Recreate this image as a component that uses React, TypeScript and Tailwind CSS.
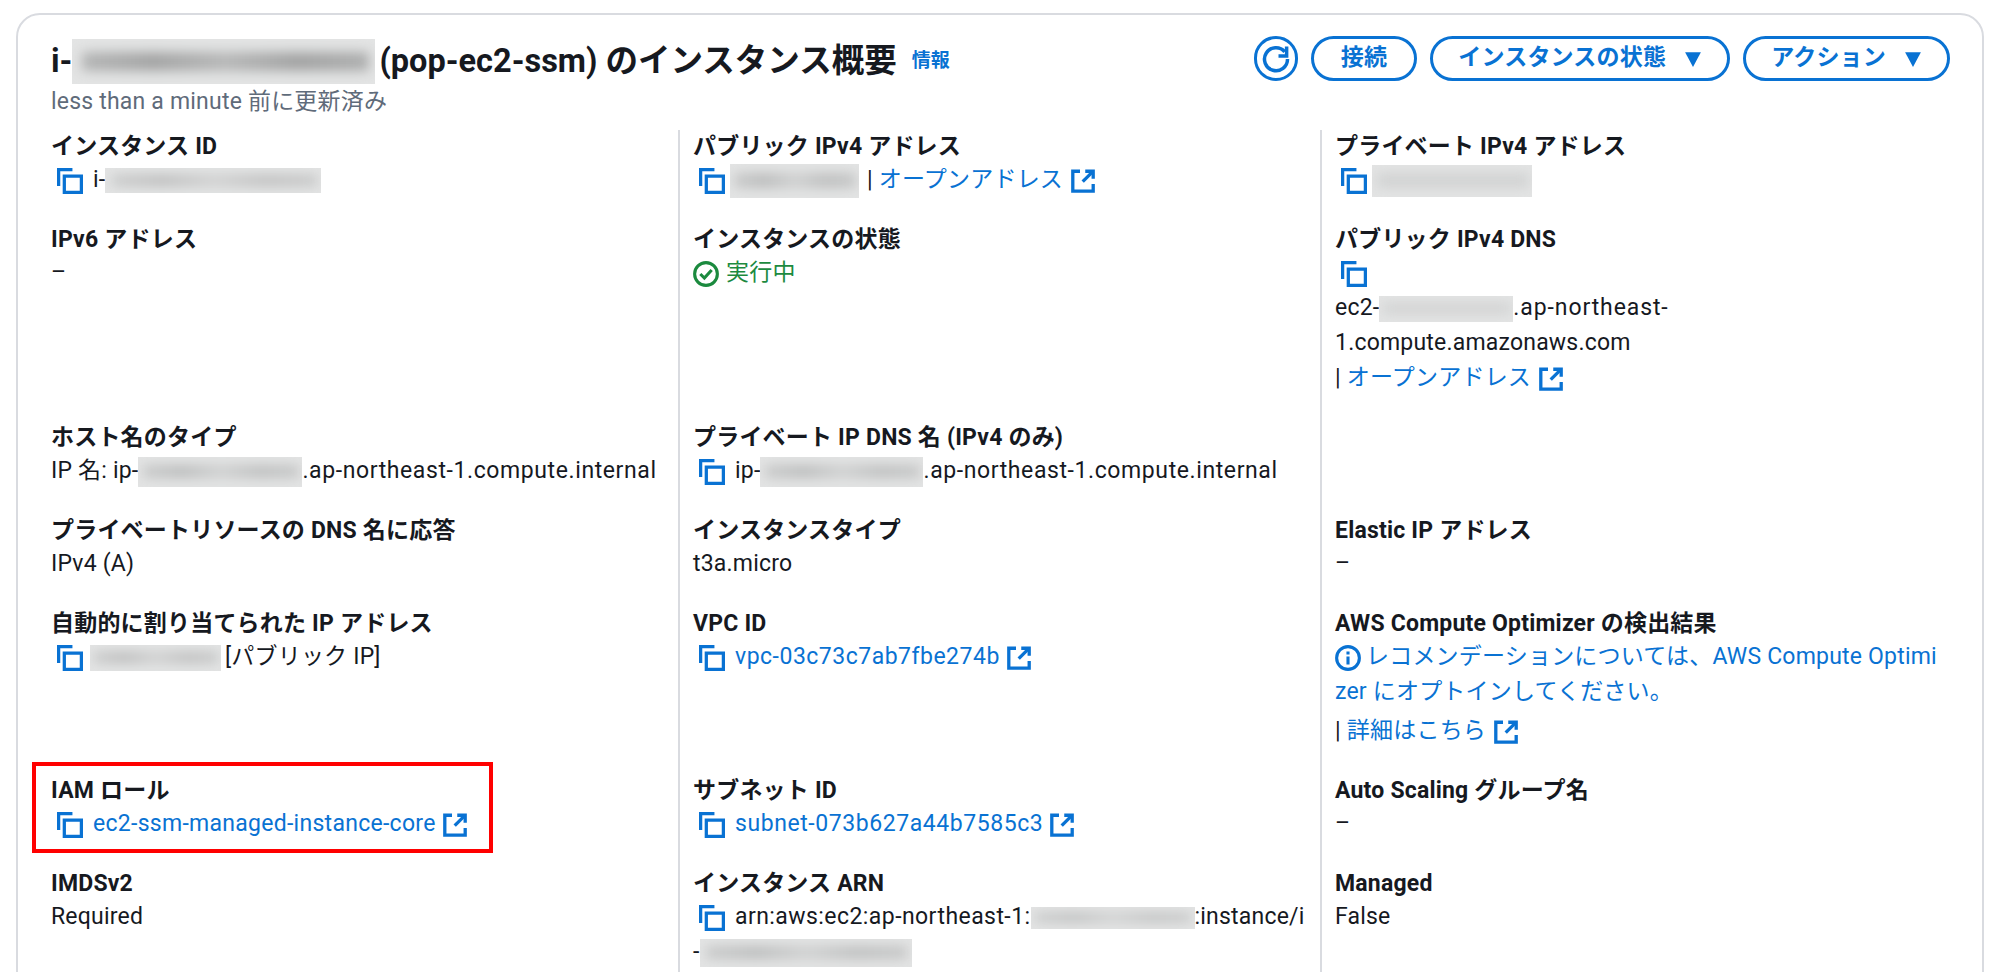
import type { ReactNode } from 'react';

const BLUE = 'text-[#0972d3]';

function CopyIcon({ className = '' }: { className?: string }) {
  return (
    <svg viewBox="0 0 16 16" className={`w-[26px] h-[26px] shrink-0 ${className}`} fill="none" stroke="#0972d3" strokeWidth="2">
      <path d="M1 11V1h8.5" />
      <rect x="4.5" y="5" width="10.5" height="10" />
    </svg>
  );
}

function ExtIcon() {
  return (
    <svg viewBox="0 0 16 16" className="w-[24px] h-[24px] shrink-0" fill="none" stroke="#0972d3" strokeWidth="2.2">
      <path d="M6 1.5H1.2v13.3h13.6V10" />
      <path d="M7.8 8.4L14 2.2" />
      <path d="M9.5 1.5h5.3v5" />
    </svg>
  );
}

function Blur({ className, smear }: { className: string; smear?: string }) {
  return (
    <span className={`relative inline-block overflow-hidden shrink-0 bg-[#e3e4e4] ${className}`}>
      <span className={`absolute inset-y-[28%] left-[3%] right-[2%] blur-[6px] ${smear ?? 'bg-[linear-gradient(90deg,#c9caca,#bcbdbd,#cfd0d0,#bfc0c0,#c6c7c7)]'}`} />
    </span>
  );
}

function Cell({ label, children, first, extra }: { label: string; children: ReactNode; first?: boolean; extra?: ReactNode }) {
  return (
    <div className={`relative pb-[25px] ${first ? 'pl-[33px] pr-3' : 'pl-[13px] pr-2 border-l-2 border-[#d9dbe0]'}`}>
      <div className="font-bold h-[33px] leading-[33px]">{label}</div>
      {children}
      {extra}
    </div>
  );
}

function Line({ children, className = '' }: { children: ReactNode; className?: string }) {
  return <div className={`flex items-center h-[35px] whitespace-nowrap ${className}`}>{children}</div>;
}

function CopyLine({ children }: { children: ReactNode }) {
  return (
    <Line>
      <CopyIcon className="ml-[6px] mr-[10px]" />
      {children}
    </Line>
  );
}

function PillButton({ label, caret }: { label: string; caret?: boolean }) {
  return (
    <button className={`h-[45px] rounded-full border-[3px] border-[#0972d3] flex items-center justify-center font-bold ${BLUE} ${caret ? 'gap-[18px] px-[25px]' : 'px-[27px]'}`}>
      {label}
      {caret && (
        <svg viewBox="0 0 16 16" className="w-[18px] h-[18px]">
          <path d="M1 2h14L8 15z" fill="#0972d3" />
        </svg>
      )}
    </button>
  );
}

export default function App() {
  return (
    <div className="h-[972px] overflow-hidden bg-white pt-[13px] pl-4 pr-4 text-[23px] tracking-[0.2px] text-[#16191f] font-[Roboto,'Noto_Sans_CJK_JP',sans-serif]">
      <div className="h-[1000px] border-2 border-[#d9dbe0] rounded-[24px]">
        {/* Header */}
        <div className="flex justify-between pl-[33px] pr-[32px] pt-[19px] h-[115px]">
          <div className="pt-[4px]">
            <div className="flex items-center h-[47px]">
              <span className="font-bold text-[32.5px] tracking-normal">i-</span>
              <Blur className="w-[303px] h-[45px] mr-[4px]" smear="bg-[linear-gradient(90deg,#b4b5b5,#a3a4a4,#b6b7b7,#a2a3a3,#adaeae)]" />
              <span className="font-bold text-[32.5px] tracking-normal whitespace-nowrap">(pop-ec2-ssm) のインスタンス概要</span>
              <span className={`ml-[15px] text-[19px] font-bold ${BLUE}`}>情報</span>
            </div>
            <div className="text-[#5f6b7a] leading-[30px] mt-[2px]">less than a minute 前に更新済み</div>
          </div>
          <div className="flex items-start gap-[13px] pt-[2px]">
            <button className="w-[44px] h-[45px] rounded-full border-[3px] border-[#0972d3] flex items-center justify-center">
              <svg viewBox="0 0 24 24" className="w-[30px] h-[30px]" fill="none" stroke="#0972d3" strokeWidth="2.8">
                <path d="M19 6.2A9.2 9.2 0 1 0 21.2 12" />
                <path d="M20.5 2v7.5H14" />
              </svg>
            </button>
            <PillButton label="接続" />
            <PillButton label="インスタンスの状態" caret />
            <PillButton label="アクション" caret />
          </div>
        </div>

        {/* Details */}
        <div className="grid grid-cols-[660px_642px_1fr]">
          <Cell first label="インスタンス ID">
            <CopyLine>i-<Blur className="w-[216px] h-[25px]" /></CopyLine>
          </Cell>
          <Cell label="パブリック IPv4 アドレス">
            <CopyLine>
              <Blur className="w-[129px] h-[34px] -ml-[5px] mr-[8px]" />
              | <span className={`ml-[6px] mr-[8px] ${BLUE}`}>オープンアドレス</span>
              <ExtIcon />
            </CopyLine>
          </Cell>
          <Cell label="プライベート IPv4 アドレス">
            <CopyLine><Blur className="w-[160px] h-[32px] -ml-[5px]" smear="bg-[#d2d3d3]" /></CopyLine>
          </Cell>

          <Cell first label="IPv6 アドレス">
            <Line>–</Line>
          </Cell>
          <Cell label="インスタンスの状態">
            <Line className="text-[#1d8a3f]">
              <svg viewBox="0 0 16 16" className="w-[26px] h-[26px] mr-[7px]" fill="none" stroke="#1b8a3e" strokeWidth="1.9">
                <circle cx="8" cy="8" r="7" />
                <path d="M4.5 8l2.5 2.5 4.5-5" />
              </svg>
              実行中
            </Line>
          </Cell>
          <Cell label="パブリック IPv4 DNS">
            <CopyLine>{null}</CopyLine>
            <Line>ec2-<Blur className="w-[134px] h-[26px]" smear="bg-[#d2d3d3]" /><span className="tracking-[0.9px]">.ap-northeast-</span></Line>
            <Line>1.compute.amazonaws.com</Line>
            <Line>| <span className={`ml-[6px] mr-[8px] ${BLUE}`}>オープンアドレス</span><ExtIcon /></Line>
          </Cell>

          <Cell first label="ホスト名のタイプ">
            <Line>IP 名: ip-<Blur className="w-[164px] h-[30px]" /><span className="tracking-[0.6px]">.ap-northeast-1.compute.internal</span></Line>
          </Cell>
          <Cell label="プライベート IP DNS 名 (IPv4 のみ)">
            <CopyLine>ip-<Blur className="w-[163px] h-[30px]" /><span className="tracking-[0.6px]">.ap-northeast-1.compute.internal</span></CopyLine>
          </Cell>
          <Cell label="">{null}</Cell>

          <Cell first label="プライベートリソースの DNS 名に応答">
            <Line>IPv4 (A)</Line>
          </Cell>
          <Cell label="インスタンスタイプ">
            <Line>t3a.micro</Line>
          </Cell>
          <Cell label="Elastic IP アドレス">
            <Line>–</Line>
          </Cell>

          <Cell first label="自動的に割り当てられた IP アドレス">
            <CopyLine><Blur className="w-[131px] h-[26px] -ml-[3px] mr-[4px]" />[パブリック IP]</CopyLine>
          </Cell>
          <Cell label="VPC ID">
            <CopyLine><span className={`mr-[7px] tracking-[0.5px] ${BLUE}`}>vpc-03c73c7ab7fbe274b</span><ExtIcon /></CopyLine>
          </Cell>
          <Cell label="AWS Compute Optimizer の検出結果">
            <Line className={BLUE}>
              <svg viewBox="0 0 16 16" className="w-[26px] h-[26px] mr-[5px]" fill="none" stroke="#0972d3" strokeWidth="1.9">
                <circle cx="8" cy="8" r="7" />
                <path d="M8 7v5M8 4v1.8" />
              </svg>
              レコメンデーションについては、AWS Compute Optimi
            </Line>
            <Line className={BLUE}>zer にオプトインしてください。</Line>
            <Line className="mt-[4px]">| <span className={`ml-[6px] mr-[8px] ${BLUE}`}>詳細はこちら</span><ExtIcon /></Line>
          </Cell>

          <Cell
            first
            label="IAM ロール"
            extra={<div className="absolute left-[14px] -top-[12px] w-[461px] h-[91px] border-4 border-[#ff0000]" />}
          >
            <CopyLine><span className={`mr-[7px] tracking-[0.28px] ${BLUE}`}>ec2-ssm-managed-instance-core</span><ExtIcon /></CopyLine>
          </Cell>
          <Cell label="サブネット ID">
            <CopyLine><span className={`mr-[7px] tracking-[0.57px] ${BLUE}`}>subnet-073b627a44b7585c3</span><ExtIcon /></CopyLine>
          </Cell>
          <Cell label="Auto Scaling グループ名">
            <Line>–</Line>
          </Cell>

          <Cell first label="IMDSv2">
            <Line>Required</Line>
          </Cell>
          <Cell label="インスタンス ARN">
            <CopyLine><span className="tracking-[0.44px]">arn:aws:ec2:ap-northeast-1:</span><Blur className="w-[164px] h-[22px]" />:instance/i</CopyLine>
            <Line>-<Blur className="w-[212px] h-[28px]" /></Line>
          </Cell>
          <Cell label="Managed">
            <Line>False</Line>
          </Cell>
        </div>
      </div>
    </div>
  );
}
